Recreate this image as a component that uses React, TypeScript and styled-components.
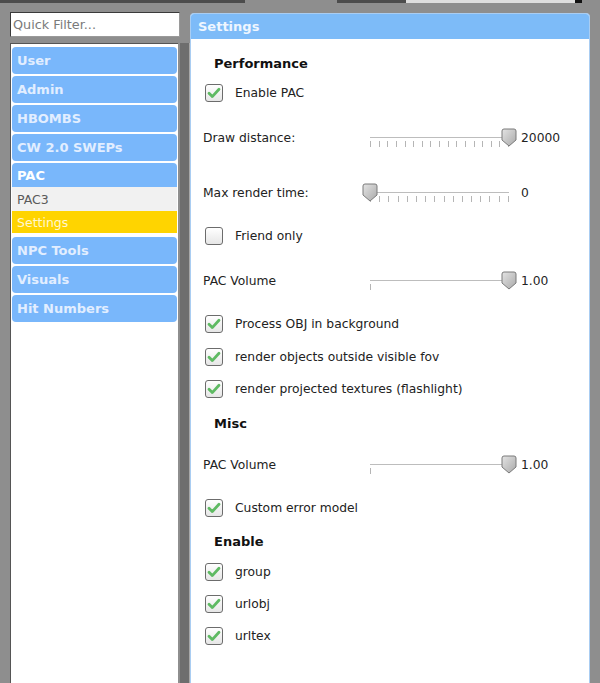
import React from "react";
import styled, { createGlobalStyle } from "styled-components";

const GlobalStyle = createGlobalStyle`
  html, body {
    margin: 0;
    padding: 0;
    height: 683px;
    overflow: hidden;
    background: #8e8e8e;
    font-family: "DejaVu Sans", Verdana, sans-serif;
  }
`;

const Page = styled.div`
  width: 600px;
  height: 683px;
  display: flex;
  flex-direction: column;
  background: #8e8e8e;
`;

const TopStrip = styled.div`
  height: 3px;
  display: flex;
  flex-shrink: 0;
`;

const StripSegment = styled.div<{ $w: number; $color: string }>`
  width: ${(p) => p.$w}px;
  background: ${(p) => p.$color};
`;

const Main = styled.div`
  flex: 1;
  display: flex;
  padding: 9px 0 0 10px;
  min-height: 0;
`;

const LeftColumn = styled.div`
  width: 170px;
  display: flex;
  flex-direction: column;
  gap: 6px;
`;

const FilterInput = styled.input`
  box-sizing: border-box;
  height: 25px;
  width: 170px;
  margin: 0;
  border: 1px solid #3a3a3a;
  border-right-color: #9a9a9a;
  border-bottom-color: #9a9a9a;
  background: #fff;
  padding: 0 2px;
  font-family: "DejaVu Sans", Verdana, sans-serif;
  font-size: 12.8px;
  color: #333;
  outline: none;
  &::placeholder {
    color: #7a7a7a;
  }
`;

const ListPanel = styled.div`
  flex: 1;
  box-sizing: border-box;
  width: 168px;
  background: #fff;
  border-left: 1px solid #555;
  border-top: 1px solid #555;
  padding: 3px 1px 0 1px;
  display: flex;
  flex-direction: column;
  gap: 2px;
`;

const Category = styled.div<{ $open?: boolean }>`
  height: ${(p) => (p.$open ? 24 : 27)}px;
  box-sizing: border-box;
  background: #79b7fb;
  border-radius: ${(p) => (p.$open ? "4px 4px 0 0" : "4px")};
  padding-left: 5px;
  display: flex;
  align-items: center;
  font-weight: bold;
  font-size: 13px;
  color: ${(p) => (p.$open ? "#ffffff" : "#e2eeff")};
`;

const CategoryGroup = styled.div`
  display: flex;
  flex-direction: column;
  margin-bottom: 2px;
`;

const SubItem = styled.div<{ $active?: boolean }>`
  height: ${(p) => (p.$active ? 22 : 24)}px;
  padding-left: 5px;
  display: flex;
  align-items: center;
  font-size: 12.5px;
  background: ${(p) => (p.$active ? "#ffd400" : "#f1f1f1")};
  color: ${(p) => (p.$active ? "#fff7d2" : "#5a5a5a")};
`;

const Splitter = styled.div`
  width: 9px;
  margin-top: 31px;
  background: #6e6e6e;
  border-right: 1px solid #a8a8a8;
`;

const SettingsPanel = styled.div`
  width: 400px;
  margin-top: 1px;
  box-sizing: border-box;
  background: #fff;
  border: 1px solid #a9cdf2;
  border-bottom: none;
  border-radius: 4px 4px 0 0;
  display: flex;
  flex-direction: column;
  overflow: hidden;
`;

const PanelHeader = styled.div`
  height: 25px;
  background: #7dbbf8;
  padding-left: 7px;
  display: flex;
  align-items: center;
  font-weight: bold;
  font-size: 13px;
  color: #eef6ff;
`;

const PanelBody = styled.div`
  padding-top: 9px;
  display: flex;
  flex-direction: column;
`;

const Row = styled.div<{ $h: number; $indent: number }>`
  height: ${(p) => p.$h}px;
  padding-left: ${(p) => p.$indent}px;
  display: flex;
  align-items: center;
  font-size: 12.3px;
  color: #222;
`;

const SectionTitle = styled.span`
  font-weight: bold;
  font-size: 13px;
  color: #111;
`;

const Box = styled.div`
  width: 18px;
  height: 18px;
  box-sizing: border-box;
  border: 1px solid #6c6c6c;
  border-radius: 3px;
  background: linear-gradient(#ffffff, #e6e6e6);
  margin-right: 12px;
  display: flex;
  align-items: center;
  justify-content: center;
`;

const SliderLabel = styled.div`
  width: 159px;
`;

const SliderBox = styled.div`
  position: relative;
  width: 155px;
  height: 20px;
`;

const Track = styled.div`
  position: absolute;
  left: 8px;
  right: 8px;
  top: 9px;
  height: 1px;
  background: #bdbdbd;
`;

const Ticks = styled.div`
  position: absolute;
  left: 8px;
  right: 8px;
  top: 13px;
  height: 6px;
  display: flex;
  justify-content: space-between;
`;

const Tick = styled.div`
  width: 1px;
  height: 6px;
  background: #b5b5b5;
`;

const Thumb = styled.svg`
  position: absolute;
  top: 0;
`;

const SliderValue = styled.div`
  margin-left: 4px;
`;

const Check: React.FC<{ checked?: boolean }> = ({ checked }) => (
  <Box>
    {checked && (
      <svg width="14" height="14" viewBox="0 0 14 14">
        <path
          d="M2 7.2 L5.3 10.6 L12 3.2"
          fill="none"
          stroke="#5fba63"
          strokeWidth="2.8"
          strokeLinecap="round"
          strokeLinejoin="round"
        />
      </svg>
    )}
  </Box>
);

const CheckRow: React.FC<{ h: number; label: string; checked?: boolean }> = ({
  h,
  label,
  checked,
}) => (
  <Row $h={h} $indent={14}>
    <Check checked={checked} />
    <span>{label}</span>
  </Row>
);

const Slider: React.FC<{ h: number; label: string; value: string; pos: number; ticks: number }> = ({
  h,
  label,
  value,
  pos,
  ticks,
}) => (
  <Row $h={h} $indent={12}>
    <SliderLabel>{label}</SliderLabel>
    <SliderBox>
      <Track />
      <Ticks>
        {Array.from({ length: ticks }).map((_, i) => (
          <Tick key={i} />
        ))}
      </Ticks>
      <Thumb width="16" height="19" viewBox="0 0 16 19" style={{ left: pos * 139 }}>
        <defs>
          <linearGradient id="thumbFill" x1="0" y1="0" x2="1" y2="1">
            <stop offset="0" stopColor="#e4e4e4" />
            <stop offset="1" stopColor="#a9a9a9" />
          </linearGradient>
        </defs>
        <path
          d="M3 1 H13 Q15 1 15 3 V12 L8 18 L1 12 V3 Q1 1 3 1 Z"
          fill="url(#thumbFill)"
          stroke="#7a7a7a"
          strokeWidth="1"
        />
      </Thumb>
    </SliderBox>
    <SliderValue>{value}</SliderValue>
  </Row>
);

const categoriesTop = ["User", "Admin", "HBOMBS", "CW 2.0 SWEPs"];
const categoriesBottom = ["NPC Tools", "Visuals", "Hit Numbers"];

export default function App() {
  return (
    <Page>
      <GlobalStyle />
      <TopStrip>
        <StripSegment $w={245} $color="#4c4c4c" />
        <StripSegment $w={92} $color="#8e8e8e" />
        <StripSegment $w={69} $color="#4c4c4c" />
        <StripSegment $w={169} $color="#dedede" />
        <StripSegment $w={7} $color="#111" />
      </TopStrip>
      <Main>
        <LeftColumn>
          <FilterInput placeholder="Quick Filter..." />
          <ListPanel>
            {categoriesTop.map((c) => (
              <Category key={c}>{c}</Category>
            ))}
            <CategoryGroup>
              <Category $open>PAC</Category>
              <SubItem>PAC3</SubItem>
              <SubItem $active>Settings</SubItem>
            </CategoryGroup>
            {categoriesBottom.map((c) => (
              <Category key={c}>{c}</Category>
            ))}
          </ListPanel>
        </LeftColumn>
        <Splitter />
        <SettingsPanel>
          <PanelHeader>Settings</PanelHeader>
          <PanelBody>
            <Row $h={30} $indent={23}>
              <SectionTitle>Performance</SectionTitle>
            </Row>
            <CheckRow h={30} label="Enable PAC" checked />
            <Slider h={60} label="Draw distance:" value="20000" pos={1} ticks={17} />
            <Slider h={50} label="Max render time:" value="0" pos={0} ticks={16} />
            <CheckRow h={36} label="Friend only" />
            <Slider h={54} label="PAC Volume" value="1.00" pos={1} ticks={1} />
            <CheckRow h={32} label="Process OBJ in background" checked />
            <CheckRow h={34} label="render objects outside visible fov" checked />
            <CheckRow h={30} label="render projected textures (flashlight)" checked />
            <Row $h={38} $indent={23}>
              <SectionTitle>Misc</SectionTitle>
            </Row>
            <Slider h={46} label="PAC Volume" value="1.00" pos={1} ticks={1} />
            <CheckRow h={40} label="Custom error model" checked />
            <Row $h={26} $indent={23}>
              <SectionTitle>Enable</SectionTitle>
            </Row>
            <CheckRow h={36} label="group" checked />
            <CheckRow h={28} label="urlobj" checked />
            <CheckRow h={36} label="urltex" checked />
          </PanelBody>
        </SettingsPanel>
      </Main>
    </Page>
  );
}
